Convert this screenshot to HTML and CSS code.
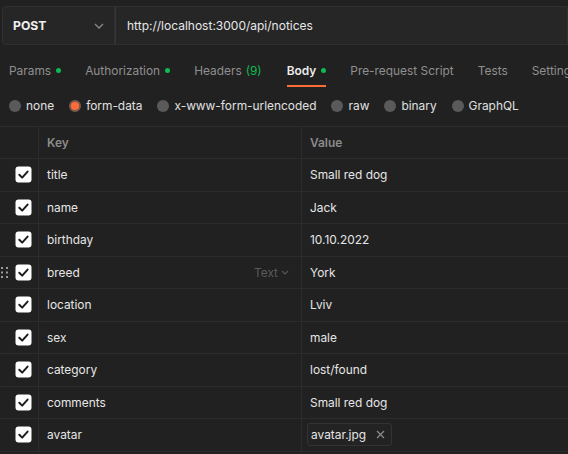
FILE: index.html
```html
<!DOCTYPE html>
<html>
<head>
<meta charset="utf-8">
<link rel="stylesheet" href="styles.css">
</head>
<body>
<div class="topbar">
  <div class="method">
    <span class="method-name">POST</span>
    <svg class="chev" width="10" height="6" viewBox="0 0 10 6"><path d="M1 1 L5 5 L9 1" fill="none" stroke="#8a8a8a" stroke-width="1.3"/></svg>
  </div>
  <div class="url">http://localhost:3000/api/notices</div>
</div>

<div class="tabs">
  <div class="tab">Params<span class="dot"></span></div>
  <div class="tab">Authorization<span class="dot"></span></div>
  <div class="tab">Headers <span class="count">(9)</span></div>
  <div class="tab active">Body<span class="dot"></span></div>
  <div class="tab">Pre-request Script</div>
  <div class="tab">Tests</div>
  <div class="tab">Settings</div>
</div>

<div class="radios">
  <label class="radio"><span class="circle"></span>none</label>
  <label class="radio"><span class="circle on"></span>form-data</label>
  <label class="radio"><span class="circle"></span>x-www-form-urlencoded</label>
  <label class="radio"><span class="circle"></span>raw</label>
  <label class="radio"><span class="circle"></span>binary</label>
  <label class="radio"><span class="circle"></span>GraphQL</label>
</div>

<div class="table">
  <div class="row head">
    <div class="c0"></div>
    <div class="c1">Key</div>
    <div class="c2">Value</div>
  </div>
  <div class="row">
    <div class="c0"><svg class="cb" width="17" height="17" viewBox="0 0 17 17"><rect x="0.5" y="0.5" width="16" height="16" rx="3" fill="#fff"/><path d="M4.3 8.8 L7.2 11.6 L12.6 5.6" fill="none" stroke="#1d1d1d" stroke-width="2" stroke-linecap="round" stroke-linejoin="round"/></svg></div>
    <div class="c1">title</div>
    <div class="c2">Small red dog</div>
  </div>
  <div class="row">
    <div class="c0"><svg class="cb" width="17" height="17" viewBox="0 0 17 17"><rect x="0.5" y="0.5" width="16" height="16" rx="3" fill="#fff"/><path d="M4.3 8.8 L7.2 11.6 L12.6 5.6" fill="none" stroke="#1d1d1d" stroke-width="2" stroke-linecap="round" stroke-linejoin="round"/></svg></div>
    <div class="c1">name</div>
    <div class="c2">Jack</div>
  </div>
  <div class="row">
    <div class="c0"><svg class="cb" width="17" height="17" viewBox="0 0 17 17"><rect x="0.5" y="0.5" width="16" height="16" rx="3" fill="#fff"/><path d="M4.3 8.8 L7.2 11.6 L12.6 5.6" fill="none" stroke="#1d1d1d" stroke-width="2" stroke-linecap="round" stroke-linejoin="round"/></svg></div>
    <div class="c1">birthday</div>
    <div class="c2">10.10.2022</div>
  </div>
  <div class="row">
    <div class="c0">
      <svg class="grip" width="7" height="11" viewBox="0 0 7 11"><g fill="#9a9a9a"><rect x="0" y="0" width="2" height="2"/><rect x="5" y="0" width="2" height="2"/><rect x="0" y="4.5" width="2" height="2"/><rect x="5" y="4.5" width="2" height="2"/><rect x="0" y="9" width="2" height="2"/><rect x="5" y="9" width="2" height="2"/></g></svg>
      <svg class="cb" width="17" height="17" viewBox="0 0 17 17"><rect x="0.5" y="0.5" width="16" height="16" rx="3" fill="#fff"/><path d="M4.3 8.8 L7.2 11.6 L12.6 5.6" fill="none" stroke="#1d1d1d" stroke-width="2" stroke-linecap="round" stroke-linejoin="round"/></svg>
    </div>
    <div class="c1 split">breed<span class="type">Text<svg width="8" height="5" viewBox="0 0 8 5"><path d="M1 1 L4 4 L7 1" fill="none" stroke="#555" stroke-width="1.2"/></svg></span></div>
    <div class="c2">York</div>
  </div>
  <div class="row">
    <div class="c0"><svg class="cb" width="17" height="17" viewBox="0 0 17 17"><rect x="0.5" y="0.5" width="16" height="16" rx="3" fill="#fff"/><path d="M4.3 8.8 L7.2 11.6 L12.6 5.6" fill="none" stroke="#1d1d1d" stroke-width="2" stroke-linecap="round" stroke-linejoin="round"/></svg></div>
    <div class="c1">location</div>
    <div class="c2">Lviv</div>
  </div>
  <div class="row">
    <div class="c0"><svg class="cb" width="17" height="17" viewBox="0 0 17 17"><rect x="0.5" y="0.5" width="16" height="16" rx="3" fill="#fff"/><path d="M4.3 8.8 L7.2 11.6 L12.6 5.6" fill="none" stroke="#1d1d1d" stroke-width="2" stroke-linecap="round" stroke-linejoin="round"/></svg></div>
    <div class="c1">sex</div>
    <div class="c2">male</div>
  </div>
  <div class="row">
    <div class="c0"><svg class="cb" width="17" height="17" viewBox="0 0 17 17"><rect x="0.5" y="0.5" width="16" height="16" rx="3" fill="#fff"/><path d="M4.3 8.8 L7.2 11.6 L12.6 5.6" fill="none" stroke="#1d1d1d" stroke-width="2" stroke-linecap="round" stroke-linejoin="round"/></svg></div>
    <div class="c1">category</div>
    <div class="c2">lost/found</div>
  </div>
  <div class="row">
    <div class="c0"><svg class="cb" width="17" height="17" viewBox="0 0 17 17"><rect x="0.5" y="0.5" width="16" height="16" rx="3" fill="#fff"/><path d="M4.3 8.8 L7.2 11.6 L12.6 5.6" fill="none" stroke="#1d1d1d" stroke-width="2" stroke-linecap="round" stroke-linejoin="round"/></svg></div>
    <div class="c1">comments</div>
    <div class="c2">Small red dog</div>
  </div>
  <div class="row">
    <div class="c0"><svg class="cb" width="17" height="17" viewBox="0 0 17 17"><rect x="0.5" y="0.5" width="16" height="16" rx="3" fill="#fff"/><path d="M4.3 8.8 L7.2 11.6 L12.6 5.6" fill="none" stroke="#1d1d1d" stroke-width="2" stroke-linecap="round" stroke-linejoin="round"/></svg></div>
    <div class="c1">avatar</div>
    <div class="c2 filecell"><span class="chip">avatar.jpg<svg width="9" height="9" viewBox="0 0 9 9"><path d="M1 1 L8 8 M8 1 L1 8" stroke="#8a8a8a" stroke-width="1.3"/></svg></span></div>
  </div>
</div>
</body>
</html>
```

FILE: styles.css
```css
html, body {
  margin: 0;
  padding: 0;
  background: #212121;
  overflow: hidden;
}
body {
  font-family: Inter, "Noto Sans", sans-serif;
  font-size: 11.9px;
  color: #e6e6e6;
  width: 568px;
  height: 454px;
}

.topbar {
  display: flex;
  padding: 6px 0 0 2px;
  height: 45px;
  box-sizing: border-box;
}
.method {
  width: 113px;
  box-sizing: border-box;
  display: flex;
  align-items: center;
  justify-content: space-between;
  padding: 0 10px 0 10px;
  background: #262626;
  border: 1px solid #303030;
  border-radius: 4px 0 0 4px;
}
.method-name {
  font-weight: 700;
  font-size: 12.2px;
  color: #f0f0f0;
}
.url {
  flex: 1;
  display: flex;
  align-items: center;
  padding-left: 11px;
  background: #262626;
  border: 1px solid #303030;
  border-left: 1px solid #363636;
  color: #e8e8e8;
  font-size: 12px;
}

.tabs {
  display: flex;
  margin-top: 10px;
  height: 32px;
  white-space: nowrap;
}
.tab {
  display: flex;
  align-items: center;
  padding: 0 12px;
  color: #8f8f8f;
  border-bottom: 2px solid transparent;
  box-sizing: border-box;
  height: 32px;
}
.tab:first-child { padding-left: 9px; }
.tab.active {
  color: #ececec;
  font-weight: 600;
  border-bottom-color: #ff6c37;
  padding: 0;
  margin: 0 12px 0 13px;
}
.dot {
  width: 5px;
  height: 5px;
  border-radius: 50%;
  background: #0cbb52;
  margin-left: 5px;
}
.count { color: #0cbb52; margin-left: 4px; }

.radios {
  display: flex;
  align-items: center;
  height: 37px;
  padding-left: 9px;
  gap: 15px;
  white-space: nowrap;
}
.radio {
  display: flex;
  align-items: center;
  gap: 5px;
  color: #e0e0e0;
}
.circle {
  width: 12px;
  height: 12px;
  border-radius: 50%;
  background: #5a5a5a;
  box-sizing: border-box;
}
.circle.on {
  background: #ff6c37;
  border: 2px solid #7a5a4e;
}

.table {
  border-top: 1px solid #2c2c2c;
  margin-top: 2px;
}
.row {
  display: grid;
  grid-template-columns: 38px 263px 1fr;
  height: 32.5px;
  border-bottom: 1px solid #2c2c2c;
  box-sizing: border-box;
}
.row.head {
  height: 32px;
  color: #8c8c8c;
  font-weight: 600;
}
.c0 {
  position: relative;
  display: flex;
  align-items: center;
  padding-left: 15px;
}
.c1, .c2 {
  display: flex;
  align-items: center;
  padding-left: 8px;
  border-left: 1px solid #2c2c2c;
}
.split {
  justify-content: space-between;
  padding-right: 12px;
}
.type {
  color: #5a5a5a;
  display: flex;
  align-items: center;
  gap: 3px;
}
.grip {
  position: absolute;
  left: 1px;
  top: 50%;
  margin-top: -5px;
}
.filecell { padding-left: 5px; }
.chip {
  display: flex;
  align-items: center;
  gap: 10px;
  height: 21px;
  padding: 0 6px 0 3px;
  border: 1px solid #333;
  border-radius: 3px;
  background: #232323;
}
```
